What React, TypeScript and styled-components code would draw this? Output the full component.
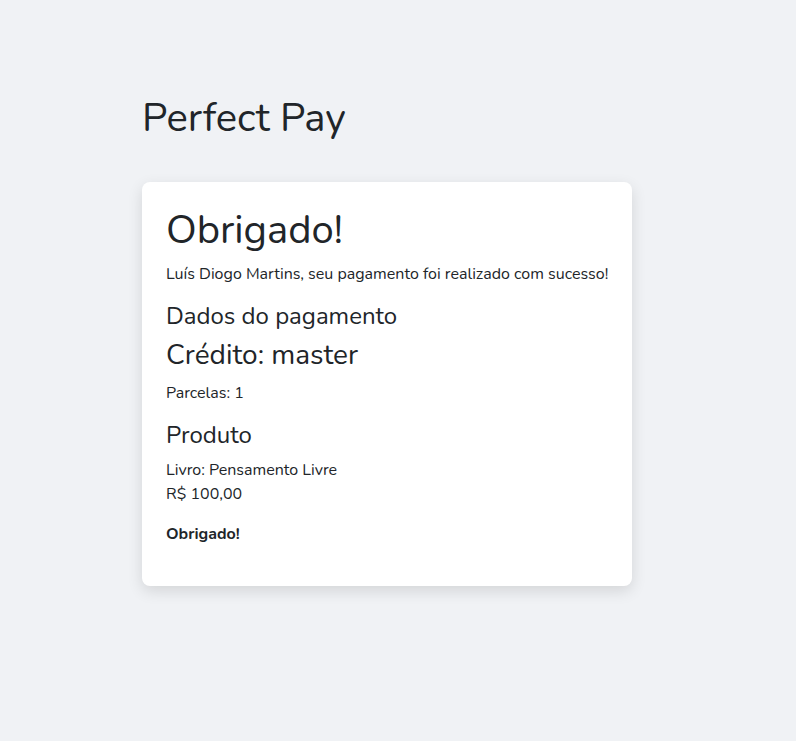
import React from "react";
import styled, { createGlobalStyle } from "styled-components";

const Global = createGlobalStyle`
  html, body { margin: 0; padding: 0; }
  body {
    background: #f0f2f5;
    color: #212529;
    font-family: "Nunito", "Lato", "Noto Sans", sans-serif;
    font-size: 16px;
    line-height: 1.5;
    min-height: 741px;
  }
`;

const Page = styled.main`
  width: 490px;
  margin: 0 auto 0 142px;
  padding-top: 94px;
`;

const Brand = styled.h1`
  margin: 0 0 40px;
  font-size: 40px;
  font-weight: 400;
  line-height: 1.2;
`;

const Card = styled.section`
  background: #fff;
  border-radius: 8px;
  box-shadow: 0 5px 15px rgba(0, 0, 0, 0.12);
  padding: 24px;
  display: flex;
  flex-direction: column;
`;

const Title = styled.h2<{ $size: number; $gap?: number }>`
  margin: 0 0 ${(p) => p.$gap ?? 8}px;
  font-size: ${(p) => p.$size}px;
  font-weight: 400;
  line-height: 1.2;
`;

const Text = styled.p<{ $gap?: number; $bold?: boolean }>`
  margin: 0 0 ${(p) => p.$gap ?? 0}px;
  font-size: 16px;
  white-space: nowrap;
  font-weight: ${(p) => (p.$bold ? 700 : 400)};
`;

export default function App() {
  return (
    <>
      <Global />
      <Page>
        <Brand>Perfect Pay</Brand>
        <Card>
          <Title $size={40} $gap={8}>Obrigado!</Title>
          <Text $gap={16}>Luís Diogo Martins, seu pagamento foi realizado com sucesso!</Text>
          <Title $size={24} $gap={8}>Dados do pagamento</Title>
          <Title $size={28} $gap={9}>Crédito: master</Title>
          <Text $gap={16}>Parcelas: 1</Text>
          <Title $size={24} $gap={8}>Produto</Title>
          <Text>Livro: Pensamento Livre</Text>
          <Text $gap={16}>R$ 100,00</Text>
          <Text $bold $gap={16}>Obrigado!</Text>
        </Card>
      </Page>
    </>
  );
}
